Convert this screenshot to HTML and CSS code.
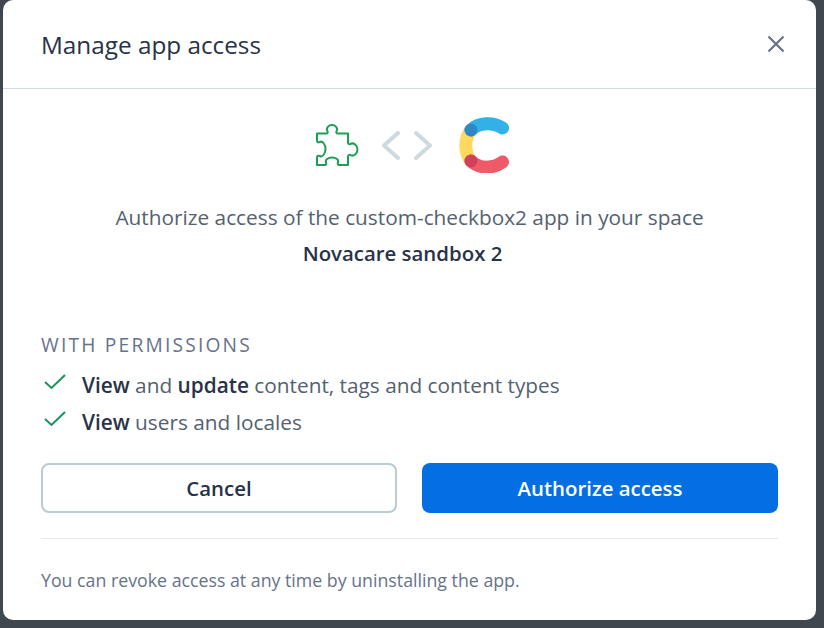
FILE: index.html
```html
<!DOCTYPE html>
<html lang="en">
<head>
<meta charset="utf-8">
<title>Manage app access</title>
<link rel="stylesheet" href="styles.css">
</head>
<body>
<div class="backdrop">
  <section class="modal">
    <header class="modal-header">
      <h1 class="modal-title">Manage app access</h1>
      <button class="close" aria-label="Close">
        <svg width="18" height="18" viewBox="0 0 18 18"><path d="M1.5 1.5 L16.5 16.5 M16.5 1.5 L1.5 16.5" stroke="#67728a" stroke-width="2.2" fill="none"/></svg>
      </button>
    </header>
    <div class="modal-body">
      <div class="logos">
        <svg class="puzzle" width="44" height="42" viewBox="0 0 44 42"><path d="M2 9.5 H11 C13 9.5 13 8 12.3 6.8 C10.8 4 13.5 1 17 1 C20.5 1 23.2 4 21.7 6.8 C21 8 21 9.5 23 9.5 H33 V18.5 C33 20.5 34.5 20.5 35.7 19.8 C38.5 18.3 42.5 21.5 42.5 25.5 C42.5 29.5 38.5 32.7 35.7 31.2 C34.5 30.5 33 30.5 33 32.5 V41 H24.5 C22.5 41 22.5 39.5 23 38.5 C24.2 36 21 33.5 17 33.5 C13 33.5 9.8 36 11 38.5 C11.5 39.5 11.5 41 9.5 41 H2 V33.5 C2 31.5 3.5 31.5 4.7 32 C7.5 33.5 10.5 29.5 10.5 25 C10.5 20.5 7.5 16.5 4.7 18 C3.5 18.5 2 18.5 2 16.5 Z" fill="none" stroke="#1f9d55" stroke-width="2" stroke-linejoin="round"/></svg>
        <svg class="code" width="50" height="29" viewBox="0 0 50 29"><path d="M16 2 L2 14.5 L16 27 M34 2 L48 14.5 L34 27" fill="none" stroke="#cfd9e0" stroke-width="4" stroke-linecap="round" stroke-linejoin="round"/></svg>
        <svg class="brand" width="50" height="56" viewBox="0 0 50 56">
          <path d="M12 13 C5 22 5 35 12 44" fill="none" stroke="#ffd85f" stroke-width="13" stroke-linecap="round"/>
          <path d="M12 13 C20 5 34 5 43.5 11" fill="none" stroke="#32b1e9" stroke-width="13" stroke-linecap="round"/>
          <path d="M12 44 C20 52 34 52 43.5 45" fill="none" stroke="#ef5a68" stroke-width="13" stroke-linecap="round"/>
          <circle cx="12" cy="13" r="6.5" fill="#2f87c3"/>
          <circle cx="12" cy="44" r="6.5" fill="#d1425a"/>
        </svg>
      </div>
      <p class="auth-line">Authorize access of the custom-checkbox2 app in your space</p>
      <p class="space-name">Novacare sandbox 2</p>
      <h2 class="perm-title">WITH PERMISSIONS</h2>
      <ul class="perm-list">
        <li class="perm-item">
          <svg width="24" height="18" viewBox="0 0 24 18"><path d="M2 9 L8.5 15 L22 2" fill="none" stroke="#14945a" stroke-width="2"/></svg>
          <span><b>View</b> and <b>update</b> content, tags and content types</span>
        </li>
        <li class="perm-item">
          <svg width="24" height="18" viewBox="0 0 24 18"><path d="M2 9 L8.5 15 L22 2" fill="none" stroke="#14945a" stroke-width="2"/></svg>
          <span><b>View</b> users and locales</span>
        </li>
      </ul>
      <div class="actions">
        <button class="btn btn-secondary">Cancel</button>
        <button class="btn btn-primary">Authorize access</button>
      </div>
      <p class="footnote">You can revoke access at any time by uninstalling the app.</p>
    </div>
  </section>
</div>
</body>
</html>
```

FILE: styles.css
```css
* { box-sizing: border-box; }
html, body { margin: 0; padding: 0; height: 100%; overflow: hidden; }
body { background: #41474f; font-family: "Open Sans", "Noto Sans", sans-serif; color: #414d63; }
.backdrop { height: 628px; padding: 0 8px 8px 3px; overflow: hidden; }
.modal { height: 620px; background: #fff; border-radius: 10px; display: flex; flex-direction: column; }
.modal-header { height: 89px; flex: none; display: flex; align-items: center; justify-content: space-between; padding: 0 31px 0 38px; border-bottom: 1px solid #d3dce0; }
.modal-title { margin: 0; font-size: 24.3px; font-weight: 500; color: #283248; }
.close { padding: 0; border: 0; background: none; width: 18px; height: 18px; display: block; }
.close svg { display: block; }
.modal-body { padding: 0 38px; display: flex; flex-direction: column; flex: 1; }
.logos { display: flex; justify-content: center; align-items: center; height: 56px; margin-top: 28px; padding-left: 4px; gap: 23px; }
.brand { margin-left: 4px; }
.auth-line { margin: 30px 0 0; text-align: center; font-size: 20.8px; line-height: 28px; color: #536171; }
.space-name { margin: 8px 14px 0 0; text-align: center; font-size: 20.4px; line-height: 28px; font-weight: 600; color: #283248; }
.perm-title { margin: 66px 0 0; font-size: 19.2px; line-height: 24px; font-weight: 500; letter-spacing: 2.2px; color: #67728a; }
.perm-list { list-style: none; margin: 14px 0 0; padding: 0; display: flex; flex-direction: column; gap: 9px; }
.perm-item { display: flex; align-items: center; gap: 15px; font-size: 20.8px; line-height: 28px; color: #536171; padding-left: 2px; }
.perm-item svg { flex: none; margin-top: -6px; }
.perm-item b { font-weight: 600; color: #283248; }
.actions { display: grid; grid-template-columns: 1fr 1fr; gap: 25px; margin-top: 27px; padding-bottom: 25px; border-bottom: 1px solid #e7ebee; }
.btn { height: 50px; border-radius: 8px; font: inherit; font-size: 20.4px; font-weight: 600; }
.btn-secondary { background: #fff; border: 2px solid #b9cbd6; color: #283248; }
.btn-primary { background: #036fe3; border: 0; color: #fff; }
.footnote { margin: 28px 0 0; font-size: 17.75px; line-height: 26px; color: #67728a; }
```
